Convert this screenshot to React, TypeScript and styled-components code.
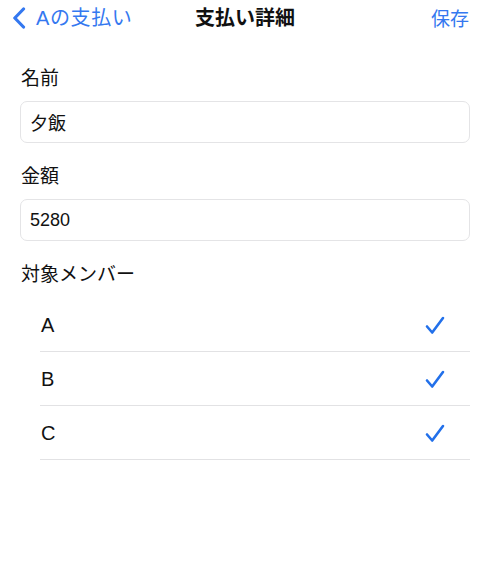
import React from 'react';
import styled, { createGlobalStyle } from 'styled-components';

const GlobalStyle = createGlobalStyle`
    html, body {
        margin: 0;
        padding: 0;
        background: #ffffff;
    }
    body {
        font-family: "Liberation Sans", "Noto Sans CJK JP", sans-serif;
        color: #111111;
        -webkit-font-smoothing: antialiased;
    }
`;

const BLUE = '#3478f0';

type Member = { name: string; selected: boolean };

const members: Member[] = [
    { name: 'A', selected: true },
    { name: 'B', selected: true },
    { name: 'C', selected: true },
];

function ChevronLeft(): JSX.Element {
    return (
        <svg width="14" height="22" viewBox="0 0 14 22" fill="none">
            <path d="M11.5 2 L2.8 11 L11.5 20" stroke={BLUE} strokeWidth="3.2"
                strokeLinecap="round" strokeLinejoin="round" />
        </svg>
    );
}

function Check(): JSX.Element {
    return (
        <svg width="20" height="19" viewBox="0 0 20 19" fill="none">
            <path d="M2 10.5 L7.2 16.5 L18 2" stroke="#2270ea" strokeWidth="2.6"
                strokeLinecap="round" strokeLinejoin="round" />
        </svg>
    );
}

export default function App(): JSX.Element {
    return (
        <>
            <GlobalStyle />
            <Screen>
                <NavBar>
                    <BackButton>
                        <ChevronLeft />
                        <span>Aの支払い</span>
                    </BackButton>
                    <Title>支払い詳細</Title>
                    <SaveButton>保存</SaveButton>
                </NavBar>

                <Form>
                    <Field>
                        <Label>名前</Label>
                        <Input defaultValue='夕飯' />
                    </Field>
                    <Field>
                        <Label>金額</Label>
                        <Input defaultValue='5280' inputMode='numeric' />
                    </Field>
                    <Field>
                        <Label>対象メンバー</Label>
                        <MemberList>
                            {members.map(m => (
                                <MemberRow key={m.name}>
                                    <MemberName>{m.name}</MemberName>
                                    {m.selected && <Check />}
                                </MemberRow>
                            ))}
                        </MemberList>
                    </Field>
                </Form>
            </Screen>
        </>
    );
}

const Screen = styled.div`
    width: 490px;
    min-height: 575px;
    background: #ffffff;
`;

const NavBar = styled.header`
    height: 36px;
    padding: 0 21px;
    display: grid;
    grid-template-columns: 1fr auto 1fr;
    align-items: center;
    box-sizing: border-box;
`;

const BackButton = styled.button`
    justify-self: start;
    margin-left: -9px;
    display: flex;
    align-items: center;
    gap: 10px;
    padding: 0;
    border: none;
    background: transparent;
    color: ${BLUE};
    font-family: "Liberation Sans", "Noto Sans CJK JP", sans-serif;
    font-size: 20px;
    line-height: 24px;
    letter-spacing: 0.6px;
    cursor: pointer;
    svg {
        margin-top: -1px;
    }
`;

const Title = styled.h1`
    margin: 0;
    font-size: 20px;
    line-height: 24px;
    font-weight: 700;
    color: #111111;
`;

const SaveButton = styled.button`
    justify-self: end;
    padding: 0;
    border: none;
    background: transparent;
    color: ${BLUE};
    font-family: "Noto Sans CJK JP", sans-serif;
    font-size: 19px;
    line-height: 24px;
    cursor: pointer;
`;

const Form = styled.main`
    padding: 31px 20px 0;
    display: flex;
    flex-direction: column;
    gap: 22px;
`;

const Field = styled.section`
    display: flex;
    flex-direction: column;
`;

const Label = styled.label`
    padding-left: 1px;
    font-size: 19px;
    line-height: 24px;
    color: #111111;
`;

const Input = styled.input`
    margin-top: 10px;
    height: 42px;
    box-sizing: border-box;
    padding: 0 9px;
    border: 1px solid #e4e4e6;
    border-radius: 7px;
    background: #ffffff;
    font-family: "Liberation Sans", "Noto Sans CJK JP", sans-serif;
    font-size: 18px;
    color: #111111;
    outline: none;
`;

const MemberList = styled.ul`
    list-style: none;
    margin: 11px 0 0 20px;
    padding: 0;
`;

const MemberRow = styled.li`
    height: 54px;
    box-sizing: border-box;
    padding: 2px 25px 0 1px;
    display: flex;
    align-items: center;
    justify-content: space-between;
    border-bottom: 1px solid #e2e2e4;
`;

const MemberName = styled.span`
    font-size: 20px;
    color: #111111;
`;
